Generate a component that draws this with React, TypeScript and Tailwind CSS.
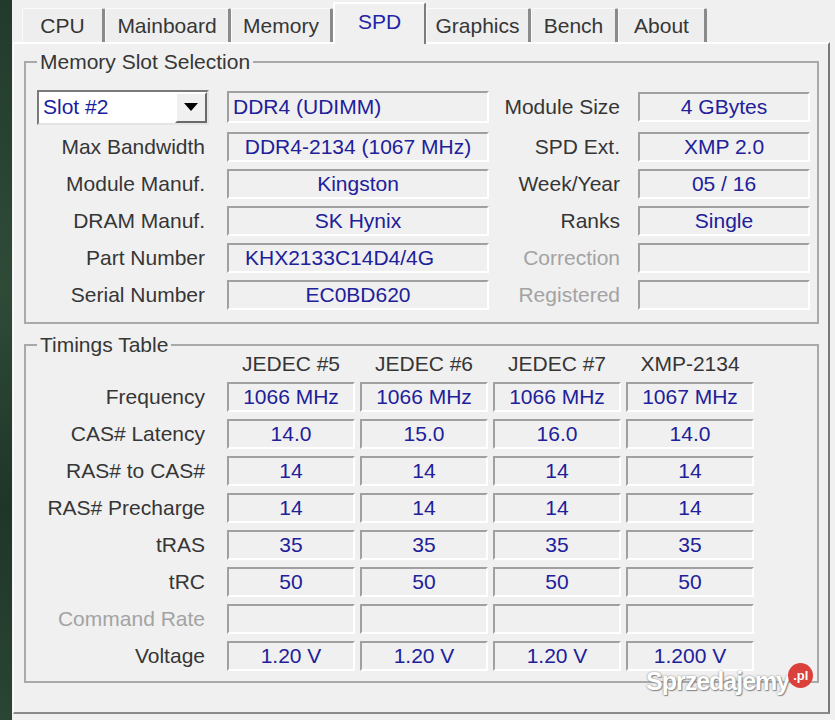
import clsx from "clsx";

const tabs = ["CPU", "Mainboard", "Memory", "SPD", "Graphics", "Bench", "About"];
const tabWidths: Record<string, string> = {
  CPU: "w-[83px]",
  Mainboard: "w-[126px]",
  Memory: "w-[102px]",
  SPD: "w-[93px]",
  Graphics: "w-[105px]",
  Bench: "w-[87px]",
  About: "w-[89px]",
};

const slotRows = [
  { label: "Max Bandwidth", value: "DDR4-2134 (1067 MHz)", align: "center", rLabel: "SPD Ext.", rValue: "XMP 2.0" },
  { label: "Module Manuf.", value: "Kingston", align: "center", rLabel: "Week/Year", rValue: "05 / 16" },
  { label: "DRAM Manuf.", value: "SK Hynix", align: "center", rLabel: "Ranks", rValue: "Single" },
  { label: "Part Number", value: "KHX2133C14D4/4G", align: "left", rLabel: "Correction", rValue: "", off: true },
  { label: "Serial Number", value: "EC0BD620", align: "center", rLabel: "Registered", rValue: "", off: true },
];

const timings = [
  { label: "Frequency", vals: ["1066 MHz", "1066 MHz", "1066 MHz", "1067 MHz"] },
  { label: "CAS# Latency", vals: ["14.0", "15.0", "16.0", "14.0"] },
  { label: "RAS# to CAS#", vals: ["14", "14", "14", "14"] },
  { label: "RAS# Precharge", vals: ["14", "14", "14", "14"] },
  { label: "tRAS", vals: ["35", "35", "35", "35"] },
  { label: "tRC", vals: ["50", "50", "50", "50"] },
  { label: "Command Rate", vals: ["", "", "", ""], off: true },
  { label: "Voltage", vals: ["1.20 V", "1.20 V", "1.20 V", "1.200 V"] },
];

// sunken read-only box
const Field = ({ children, className }: { children?: React.ReactNode; className?: string }) => (
  <div
    className={clsx(
      "h-[30px] flex items-center shrink-0 border-2 border-t-[#a0a0a0] border-l-[#a0a0a0] border-b-white border-r-white text-[#20209a] whitespace-nowrap",
      className
    )}
  >
    {children}
  </div>
);

const App = () => {
  return (
    <main className="relative w-[835px] h-[720px] bg-[#f0f0f0] flex overflow-hidden font-['Liberation_Sans',Arial,sans-serif] text-[21px] text-[#363636]">
      {/* desktop behind the window */}
      <div className="w-[12px] h-full bg-[linear-gradient(180deg,#223a2c,#2f4b38_40%,#1f3528_70%,#2a4534)]" />

      <div className="flex flex-col w-[823px]">
        {/* --- TABS --- */}
        <div className="h-[42px] flex items-end pl-[10px]">
          {tabs.map((t) =>
            t === "SPD" ? (
              <div
                key={t}
                className={clsx(
                  tabWidths[t],
                  "relative z-10 h-[42px] -mb-[2px] flex items-center justify-center pb-[4px] bg-[#f0f0f0] border-l-2 border-t-2 border-white border-r-2 border-r-[#7c7c7c] rounded-t-[2px] text-[#2424a8]"
                )}
              >
                {t}
              </div>
            ) : (
              <div
                key={t}
                className={clsx(
                  tabWidths[t],
                  "h-[34px] flex items-center justify-center bg-[#eeeeee] border-l border-t border-[#fafafa] border-r-[3px] border-r-[#8a8a8a] rounded-t-[2px]"
                )}
              >
                {t}
              </div>
            )
          )}
        </div>

        {/* --- PANEL --- */}
        <div className="ml-[1px] w-[817px] h-[672px] border-t-2 border-l border-white border-r-2 border-r-[#7a7a7a] border-b-2 border-b-[#8a8a8a] flex flex-col gap-[9px] pl-[10px] pt-[6px]">
          {/* Memory Slot Selection */}
          <fieldset className="w-[795px] border-2 border-[#a9a9a9] pt-[15px] pb-[12px] flex flex-col gap-[7px]">
            <legend className="ml-[11px] px-[3px] leading-[24px]">Memory Slot Selection</legend>

            <div className="h-[36px] flex items-center">
              <div className="ml-[11px] w-[172px] h-[35px] bg-white border-2 border-t-[#7a7a7a] border-l-[#7a7a7a] border-b-[#e4e4e4] border-r-[#e4e4e4] flex items-center">
                <span className="flex-1 pl-[4px] text-[#1c1ca0]">Slot #2</span>
                <div className="w-[32px] h-[31px] bg-[#f0f0f0] border-2 border-t-white border-l-white border-b-[#6a6a6a] border-r-[#6a6a6a] flex items-center justify-center">
                  <svg width="14" height="8" viewBox="0 0 14 8">
                    <path d="M0 0h14L7 8z" fill="#000" />
                  </svg>
                </div>
              </div>
              <Field className="ml-[18px] w-[262px] h-[32px] pl-[4px]">DDR4 (UDIMM)</Field>
              <div className="w-[131px] text-right">Module Size</div>
              <Field className="ml-[18px] w-[172px] justify-center">4 GBytes</Field>
            </div>

            {slotRows.map((r) => (
              <div key={r.label} className="h-[30px] flex items-center">
                <div className="w-[179px] text-right">{r.label}</div>
                <Field
                  className={clsx(
                    "ml-[22px] w-[262px]",
                    r.align === "center" ? "justify-center" : "pl-[16px]"
                  )}
                >
                  {r.value}
                </Field>
                <div className={clsx("w-[131px] text-right", r.off && "text-[#a3a3a3]")}>{r.rLabel}</div>
                <Field className="ml-[18px] w-[172px] justify-center">{r.rValue}</Field>
              </div>
            ))}
          </fieldset>

          {/* Timings Table */}
          <fieldset className="w-[795px] border-2 border-[#a9a9a9] pb-[10px] flex flex-col gap-[7px]">
            <legend className="ml-[11px] px-[3px] leading-[24px]">Timings Table</legend>

            <div className="-mt-[4px] h-[22px] flex items-center pl-[201px] gap-[5px]">
              {["JEDEC #5", "JEDEC #6", "JEDEC #7", "XMP-2134"].map((h) => (
                <div key={h} className="w-[128px] text-center">
                  {h}
                </div>
              ))}
            </div>

            {timings.map((r) => (
              <div key={r.label} className="h-[30px] flex items-center">
                <div className={clsx("w-[179px] text-right", r.off && "text-[#a3a3a3]")}>{r.label}</div>
                <div className="ml-[22px] flex gap-[5px]">
                  {r.vals.map((v, i) => (
                    <Field key={i} className="w-[128px] justify-center">
                      {v}
                    </Field>
                  ))}
                </div>
              </div>
            ))}
          </fieldset>
        </div>
      </div>

      {/* watermark */}
      <div className="absolute left-[646px] top-[664px] flex items-start">
        <span className="text-[25px] font-bold tracking-[-1px] text-white [text-shadow:0_0_2px_#7a7a7a,1px_1px_1px_#8a8a8a] leading-[34px]">
          Sprzedajemy
        </span>
        <span className="-ml-[1px] -mt-[1px] w-[25px] h-[25px] rounded-full bg-[#d9413a] text-white text-[13px] font-bold flex items-center justify-center leading-none">
          .pl
        </span>
      </div>
    </main>
  );
};

export default App;
